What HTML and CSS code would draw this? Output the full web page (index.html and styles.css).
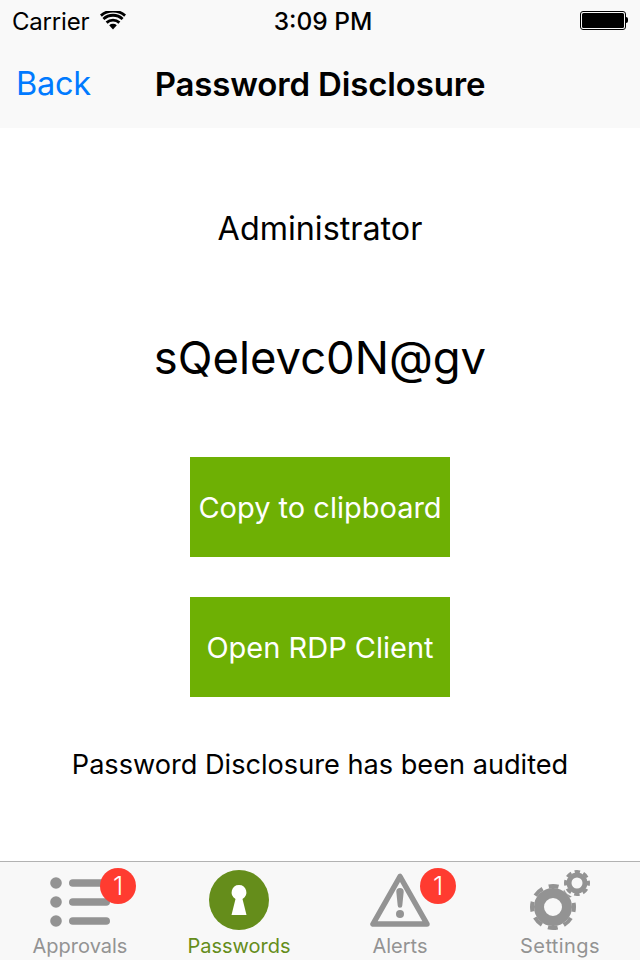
FILE: index.html
```html
<!DOCTYPE html>
<html lang="en">
<head>
<meta charset="utf-8">
<title>Password Disclosure</title>
<link rel="stylesheet" href="styles.css">
</head>
<body>
<div class="screen">
  <header class="top">
    <div class="status">
      <div class="status-left">
        <span class="carrier">Carrier</span>
        <svg class="wifi" width="26" height="19" viewBox="0 0 26 19"><path d="M13 18.500 9.200 14.200a5.600 5.600 0 0 1 7.600 0z" fill="#000"/><path d="M6.600 11.200a9.400 9.400 0 0 1 12.800 0M3.400 7.600a14.200 14.200 0 0 1 19.200 0M.9 4.200a18.400 18.400 0 0 1 24.200 0" fill="none" stroke="#000" stroke-width="2.800" transform="translate(0 .4)"/></svg>
      </div>
      <span class="time">3:09 PM</span>
      <div class="battery"><div class="battery-body"><div class="battery-fill"></div></div><div class="battery-tip"></div></div>
    </div>
    <nav class="navbar">
      <a class="back">Back</a>
      <h1 class="title">Password Disclosure</h1>
    </nav>
  </header>
  <main class="content">
    <p class="user">Administrator</p>
    <p class="password">sQelevc0N@gv</p>
    <button class="action">Copy to clipboard</button>
    <button class="action">Open RDP Client</button>
    <p class="note">Password Disclosure has been audited</p>
  </main>
  <footer class="tabbar">
    <div class="tab">
      <div class="icon">
        <svg width="60" height="60" viewBox="0 0 60 60"><g fill="#939393"><circle cx="6" cy="13" r="5.800"/><circle cx="6" cy="32" r="5.800"/><circle cx="6" cy="51" r="5.800"/><rect x="19" y="9.200" width="41" height="7.600" rx="3.800"/><rect x="19" y="28.200" width="41" height="7.600" rx="3.800"/><rect x="19" y="47.200" width="41" height="7.600" rx="3.800"/></g></svg>
        <span class="badge">1</span>
      </div>
      <span class="label">Approvals</span>
    </div>
    <div class="tab active">
      <div class="icon">
        <svg width="60" height="60" viewBox="0 0 60 60"><circle cx="30" cy="30" r="30" fill="#658d1b"/><path d="M30 15a7.400 7.400 0 0 1 3.500 13.900L37.500 45h-15l4-16.100A7.400 7.400 0 0 1 30 15z" fill="#fff"/></svg>
      </div>
      <span class="label">Passwords</span>
    </div>
    <div class="tab">
      <div class="icon">
        <svg width="60" height="60" viewBox="0 0 60 60"><path d="M30 6.500 3 54h54z" fill="none" stroke="#939393" stroke-width="5.500" stroke-linejoin="round"/><path d="M26.300 21.700a3.700 3.700 0 0 1 7.400 0L32.300 35.500a2.300 2.300 0 0 1-4.600 0z" fill="#939393"/><circle cx="30" cy="44" r="4" fill="#939393"/></svg>
        <span class="badge">1</span>
      </div>
      <span class="label">Alerts</span>
    </div>
    <div class="tab">
      <div class="icon">
        <svg width="62" height="60" viewBox="0 0 62 60"><g fill="none" stroke="#939393"><circle cx="24" cy="37" r="14" stroke-width="10"/><circle cx="24" cy="37" r="21" stroke-width="4" stroke-dasharray="10 6.490" stroke-dashoffset="5"/><circle cx="48" cy="13" r="14.500" fill="#f8f8f8" stroke="none"/><circle cx="48" cy="13" r="8" stroke-width="5"/><circle cx="48" cy="13" r="11.500" stroke-width="3" stroke-dasharray="5.500 3.530" stroke-dashoffset="2.750"/></g></svg>
      </div>
      <span class="label label-wide">Settings</span>
    </div>
  </footer>
</div>
</body>
</html>
```
FILE: styles.css
```css
* { box-sizing: border-box; }
html, body { margin: 0; padding: 0; }
body { font-family: Inter, "Liberation Sans", sans-serif; background: #fff; color: #000; }
.screen { width: 640px; height: 960px; display: flex; flex-direction: column; overflow: hidden; }
.top { height: 128px; background: #f9f9f9; flex: none; }
.status { height: 40px; padding: 0 12px; display: grid; grid-template-columns: 1fr auto 1fr; align-items: center; }
.status-left { display: flex; align-items: center; gap: 11px; }
.carrier { font-size: 24px; letter-spacing: -0.2px; position: relative; top: 1px; }
.wifi { display: block; }
.time { font-size: 24.500px; font-weight: 500; position: relative; top: 1px; left: 3px; }
.battery { justify-self: end; display: flex; align-items: center; }
.battery-body { width: 46px; height: 19px; border: 1px solid #000; border-radius: 3px; padding: 1px; }
.battery-fill { height: 100%; background: #000; border-radius: 1.500px; }
.battery-tip { width: 2px; height: 6px; background: #000; border-radius: 0 2px 2px 0; }
.navbar { height: 88px; display: flex; align-items: center; position: relative; }
.back { position: absolute; left: 16px; top: 24px; font-size: 32.500px; line-height: 40px; color: #007aff; letter-spacing: -0.3px; }
.title { margin: 0 auto; font-size: 33px; line-height: 40px; font-weight: 600; letter-spacing: -0.15px; }
.content { flex: 1; display: flex; flex-direction: column; align-items: center; }
.user { margin: 81px 0 0; font-size: 32.300px; line-height: 40px; }
.password { margin: 82px 0 0; font-size: 45.400px; line-height: 54px; }
.action { width: 260px; height: 100px; margin: 0 0 40px; padding: 2px 0 0; border: 0; background: #6eb004; color: #fff; font: 400 29px/36px Inter, "Liberation Sans", sans-serif; flex: none; }
.password + .action { margin-top: 72px; }
.note { margin: 10px 0 0; font-size: 27.150px; line-height: 36px; }
.tabbar { height: 99px; flex: none; display: grid; grid-template-columns: repeat(4, 1fr); background: #f8f8f8; border-top: 1px solid #b2b2b2; color: #939393; }
.tab { display: flex; flex-direction: column; align-items: center; padding-top: 8px; position: relative; }
.tab.active { color: #658d1b; padding-right: 2px; }
.icon { width: 60px; height: 60px; position: relative; display: flex; justify-content: center; }
.icon svg { display: block; flex: none; }
.label { font-size: 20px; line-height: 24px; margin-top: 4px; }
.label-wide { letter-spacing: 0.4px; }
.badge { position: absolute; left: 50px; top: -2px; width: 36px; height: 36px; border-radius: 50%; background: #ff3b30; color: #fff; font-size: 26px; font-weight: 300; line-height: 36px; text-align: center; }
```
